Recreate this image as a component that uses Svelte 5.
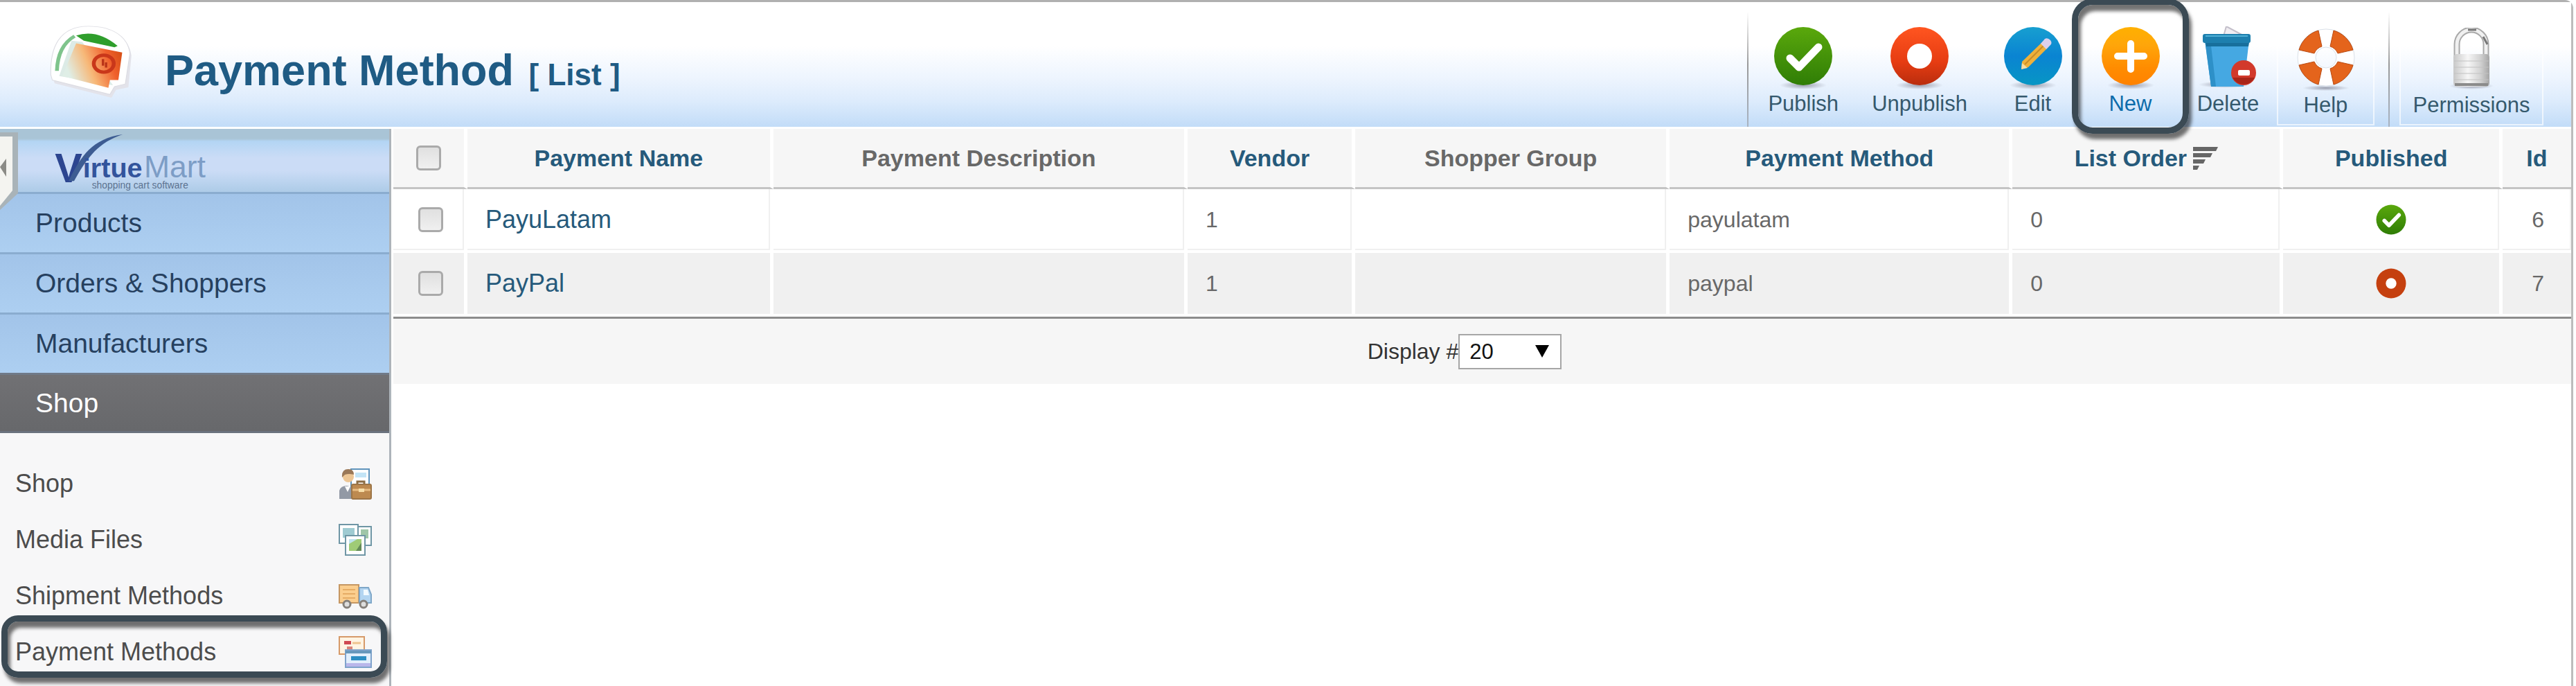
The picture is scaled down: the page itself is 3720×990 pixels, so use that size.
<script>
  const menu = ['Products', 'Orders & Shoppers', 'Manufacturers', 'Shop'];
  const shopLinks = [
    { label: 'Shop', icon: 'shop' },
    { label: 'Media Files', icon: 'media' },
    { label: 'Shipment Methods', icon: 'truck' },
    { label: 'Payment Methods', icon: 'cards', marked: true }
  ];
  const tools = [
    { label: 'Publish', icon: 'publish' },
    { label: 'Unpublish', icon: 'unpublish' },
    { label: 'Edit', icon: 'edit' },
    { label: 'New', icon: 'new', marked: true },
    { label: 'Delete', icon: 'delete' },
    { label: 'Help', icon: 'help', boxed: true }
  ];
  const columns = [
    { label: 'Payment Name', width: 14.05, sortable: true },
    { label: 'Payment Description', width: 19.02 },
    { label: 'Vendor', width: 7.7, sortable: true },
    { label: 'Shopper Group', width: 14.44 },
    { label: 'Payment Method', width: 15.74, sortable: true },
    { label: 'List Order', width: 12.44, sortable: true, sorted: true },
    { label: 'Published', width: 10.06, sortable: true },
    { label: 'Id', width: 3.15, sortable: true }
  ];
  let rows = $state([
    { id: 6, name: 'PayuLatam', vendor: 1, method: 'payulatam', order: 0, published: true, checked: false },
    { id: 7, name: 'PayPal', vendor: 1, method: 'paypal', order: 0, published: false, checked: false }
  ]);
  let active = $state('Shop');
  let limit = $state('20');

  function toggleAll(event) {
    for (const row of rows) row.checked = event.currentTarget.checked;
  }
</script>

{#snippet okBadge()}
  <circle cx="43" cy="43" r="42" fill="url(#gGreen)" />
  <path d="M24 46 L37 59 L65 30" fill="none" stroke="#fff" stroke-width="11" stroke-linecap="round" stroke-linejoin="round" />
{/snippet}

{#snippet toolIcon(name)}
  <svg class="tool-icon" viewBox="0 0 86 92" aria-hidden="true">
    {#if name === 'publish' || name === 'unpublish' || name === 'edit' || name === 'new'}
      <ellipse cx="43" cy="85" rx="34" ry="6" fill="url(#gShadow)" />
    {/if}
    {#if name === 'publish'}
      {@render okBadge()}
    {:else if name === 'unpublish'}
      <circle cx="43" cy="43" r="42" fill="url(#gRed)" />
      <circle cx="43" cy="43" r="18" fill="#fff" />
    {:else if name === 'edit'}
      <circle cx="43" cy="43" r="42" fill="url(#gBlue)" />
      <path d="M26 62 L27 51 L57 22 L65 30 L36 59 Z" fill="#eeb13c" />
      <path d="M31 55 L60 26" stroke="#c98c2a" stroke-width="2" />
      <path d="M26 62 L27 53 L35 60 Z" fill="#f5dba6" />
      <path d="M54 25 L60 18 Q64 16 68 20 Q71 24 68 27 L62 33 Z" fill="#dcd0ec" />
    {:else if name === 'new'}
      <circle cx="43" cy="43" r="42" fill="url(#gOrange)" />
      <path d="M43 25 V62 M24 43 H62" stroke="#fff" stroke-width="10" stroke-linecap="round" />
    {:else if name === 'delete'}
      <ellipse cx="38" cy="84" rx="38" ry="5" fill="url(#gShadow)" />
      <path d="M36 14 L40 0 L66 14 Z" fill="#f0edf2" stroke="#c3bfca" stroke-width="2" />
      <path d="M9 20 H73 L65 87 H18 Z" fill="#45a8e2" />
      <path d="M9 20 H17 L25 87 H18 Z" fill="#2e90c8" />
      <path d="M10 23 H73 L72 29 H11 Z" fill="#176f9c" />
      <rect x="6" y="11" width="69" height="13" rx="3" fill="#1d7fae" />
      <path d="M10 14 H71" stroke="#4fb0d6" stroke-width="2" />
      <circle cx="65" cy="67" r="18" fill="#d2392b" />
      <path d="M49 74 A18 18 0 0 0 81 74 Z" fill="#a92519" />
      <rect x="57" y="63" width="17" height="8" rx="2" fill="#fff" />
    {:else if name === 'help'}
      <ellipse cx="43" cy="87" rx="34" ry="4" fill="url(#gShadow)" />
      <circle cx="43" cy="43" r="28" fill="none" stroke="#fff" stroke-width="27" />
      <circle cx="43" cy="43" r="41" fill="none" stroke="#d9e0e8" stroke-width="1" />
      <circle cx="43" cy="43" r="15" fill="none" stroke="#d9e0e8" stroke-width="1" />
      <g fill="#e4641c" stroke="#b94a12" stroke-width="1">
        <path d="M32 4 A41 41 0 0 0 4 32 L26 37 A18 18 0 0 1 37 27 Z" />
        <path d="M54 4 A41 41 0 0 1 82 32 L60 37 A18 18 0 0 0 49 27 Z" />
        <path d="M32 82 A41 41 0 0 1 4 54 L26 49 A18 18 0 0 0 37 59 Z" />
        <path d="M54 82 A41 41 0 0 0 82 54 L60 49 A18 18 0 0 1 49 59 Z" />
      </g>
    {:else if name === 'lock'}
      <ellipse cx="43" cy="84" rx="32" ry="5" fill="url(#gShadow)" />
      <path d="M22 44 V24 A21 21 0 0 1 64 24 V44" fill="none" stroke="#a9a9a9" stroke-width="9" />
      <path d="M22 44 V24 A21 21 0 0 1 64 24 V44" fill="none" stroke="#f0f0f0" stroke-width="5" />
      <path d="M38 3 H50 M60 13 L66 24" stroke="#777" stroke-width="3" />
      <rect x="17" y="38" width="52" height="47" rx="5" fill="url(#gSteel)" />
      <path d="M18 48 H68 M18 57 H68 M18 66 H68 M18 75 H68" stroke="#c2c2c2" stroke-width="1" />
      <path d="M19 82 H67" stroke="#8b8b8b" stroke-width="4" />
    {/if}
  </svg>
{/snippet}

{#snippet linkIcon(name)}
  <svg class="link-icon" viewBox="0 0 48 48" aria-hidden="true">
    {#if name === 'shop'}
      <rect x="18" y="3" width="26" height="30" fill="#fff" stroke="#5f93bb" stroke-width="2" />
      <path d="M24 8 H40 V15 H24 Z" fill="#c3e4f6" />
      <path d="M1 46 V34 Q3 27 12 27 Q20 28 21 36 V46 Z" fill="#9299a5" />
      <path d="M9 28 L13 36 L17 28 Z" fill="#fff" />
      <circle cx="14" cy="14" r="8" fill="#edc695" />
      <path d="M5 15 Q4 3 14 3 Q22 3 22 11 Q15 9 9 11 Z" fill="#9a7858" />
      <path d="M27 26 V21 H37 V26" fill="none" stroke="#8b6d45" stroke-width="3" />
      <rect x="19" y="25" width="28" height="21" rx="2" fill="#bd8a50" stroke="#9c7547" stroke-width="2" />
      <path d="M20 33 H46" stroke="#e8bd83" stroke-width="3" />
      <rect x="29" y="31" width="8" height="5" fill="#f7dfa9" />
    {:else if name === 'media'}
      <g fill="#fff" stroke="#6f96a5" stroke-width="2">
        <rect x="28" y="5" width="19" height="27" />
        <rect x="1" y="2" width="27" height="27" />
      </g>
      <rect x="6" y="7" width="17" height="14" fill="#9fcbd2" />
      <rect x="32" y="9" width="11" height="13" fill="#9fc6a8" />
      <rect x="10" y="18" width="28" height="28" fill="#fff" stroke="#6f96a5" stroke-width="2" />
      <rect x="15" y="23" width="18" height="17" fill="#9fcb76" />
      <path d="M15 30 V23 H27 Z" fill="#bfe3ed" />
      <path d="M25 40 L33 28 V40 Z" fill="#648b57" />
    {:else if name === 'truck'}
      <rect x="1" y="8" width="28" height="26" fill="#fbce8e" stroke="#c59763" stroke-width="2" />
      <path d="M6 15 H24 M6 21 H24 M6 27 H24" stroke="#e6ac65" stroke-width="2" />
      <path d="M30 12 H43 L47 22 V34 H30 Z" fill="#b3d5f1" stroke="#7fa7c8" stroke-width="2" />
      <path d="M36 15 H42 L44 23 H36 Z" fill="#f2faff" />
      <circle cx="12" cy="36" r="5" fill="#ddd" stroke="#85807b" stroke-width="3" />
      <circle cx="36" cy="36" r="5" fill="#ddd" stroke="#85807b" stroke-width="3" />
    {:else}
      <rect x="1" y="2" width="36" height="25" fill="#fff4e3" stroke="#d69a69" stroke-width="2" />
      <rect x="8" y="8" width="10" height="5" fill="#cf4a52" />
      <rect x="12" y="16" width="8" height="4" fill="#d88579" />
      <path d="M20 11 H32" stroke="#efc48e" stroke-width="3" />
      <rect x="10" y="21" width="37" height="25" fill="#e2effc" stroke="#7fa3cb" stroke-width="2" />
      <path d="M10 24 H47" stroke="#6798bc" stroke-width="4" />
      <rect x="18" y="30" width="22" height="6" fill="#2e8fc4" />
      <rect x="11" y="40" width="35" height="5" fill="#b9b6ea" />
    {/if}
  </svg>
{/snippet}

<svg class="defs" width="0" height="0" aria-hidden="true">
  <defs>
    <linearGradient id="gGreen" x1="0" y1="0" x2="0" y2="1"><stop offset="0" stop-color="#5aa80c" /><stop offset="1" stop-color="#2f7d06" /></linearGradient>
    <linearGradient id="gRed" x1="0" y1="0" x2="0" y2="1"><stop offset="0" stop-color="#ff5520" /><stop offset="0.6" stop-color="#e63c12" /><stop offset="1" stop-color="#b92d0e" /></linearGradient>
    <linearGradient id="gBlue" x1="0" y1="0" x2="0" y2="1"><stop offset="0" stop-color="#179fd0" /><stop offset="0.5" stop-color="#0a84d2" /><stop offset="1" stop-color="#0796c4" /></linearGradient>
    <linearGradient id="gOrange" x1="0" y1="0" x2="0" y2="1"><stop offset="0" stop-color="#ffb000" /><stop offset="0.3" stop-color="#ffa60a" /><stop offset="0.7" stop-color="#ff8c00" /><stop offset="1" stop-color="#ff8200" /></linearGradient>
    <linearGradient id="gSteel" x1="0" y1="0" x2="1" y2="0"><stop offset="0" stop-color="#c8c8c8" /><stop offset="0.4" stop-color="#f6f6f6" /><stop offset="0.75" stop-color="#d2d2d2" /><stop offset="1" stop-color="#a5a5a5" /></linearGradient>
    <radialGradient id="gShadow"><stop offset="0" stop-color="#667" stop-opacity="0.6" /><stop offset="1" stop-color="#667" stop-opacity="0" /></radialGradient>
    <linearGradient id="gCard" x1="0" y1="0.3" x2="1" y2="0"><stop offset="0" stop-color="#dfeee6" /><stop offset="0.35" stop-color="#f7b878" /><stop offset="0.7" stop-color="#f0602c" /><stop offset="1" stop-color="#cf4a10" /></linearGradient>
  </defs>
</svg>

<div class="page">
  <header>
    <svg class="title-icon" viewBox="0 0 110 112" preserveAspectRatio="none" aria-hidden="true">
      <path d="M4 78 C2 34 14 2 52 2 C86 2 104 20 106 44 L102 92 L86 96 L80 108 L6 86 Z" fill="#e3e3ea" transform="translate(2 3)" />
      <path d="M3 76 C2 34 14 2 52 2 C86 2 104 20 106 44 L100 90 L86 94 L80 106 L5 84 Z" fill="#fff" stroke="#dcdce2" stroke-width="1" />
      <path d="M36 16 Q64 6 90 32 L86 34 L46 24 Z" fill="#2f9e2c" />
      <path d="M34 17 Q12 32 11 70" fill="none" stroke="#7fc48c" stroke-width="5" />
      <path d="M30 24 L44 26 L84 92 L14 78 Z" fill="#dcebe6" />
      <path d="M36 28 L96 42 L91 84 L80 84 L78 96 L18 78 Z" fill="url(#gCard)" />
      <circle cx="72" cy="59" r="13" fill="none" stroke="#c9371a" stroke-width="5" />
      <path d="M71 52 V62 M75 57 V65" stroke="#b93318" stroke-width="3" />
    </svg>
    <h1>Payment Method <small>[ List ]</small></h1>
    <div class="toolbar">
      {#each tools as tool}
        <button type="button" class:boxed={tool.boxed} class:current={tool.marked}>
          {@render toolIcon(tool.icon)}
          <span>{tool.label}</span>
          {#if tool.marked}<i class="marker"></i>{/if}
        </button>
      {/each}
    </div>
    <div class="toolbar last">
      <button type="button" class="boxed">
        {@render toolIcon('lock')}
        <span>Permissions</span>
      </button>
    </div>
  </header>

  <div class="body">
    <aside>
      <button type="button" class="collapse" aria-label="Collapse menu">
        <svg viewBox="0 0 28 112" aria-hidden="true">
          <path d="M0 0 H26 V88 L0 112 Z" fill="#a9b3b8" />
          <path d="M0 6 H18 V84 L0 106 Z" fill="#f4f4f0" />
          <path d="M0 50 L9 38 V64 Z" fill="#8b8b86" />
        </svg>
      </button>
      <a class="logo" href="#home" aria-label="VirtueMart">
        <svg viewBox="0 0 240 92" aria-hidden="true">
          <text x="0" y="78" class="logo-v">V</text>
          <path d="M20 76 C36 44 52 14 99 8 C62 20 46 44 28 76 Z" fill="#3d5c92" />
          <text x="41" y="71" class="logo-a">irtue</text>
          <text x="130" y="71" class="logo-b">Mart</text>
          <text x="54" y="87" class="logo-c">shopping cart software</text>
        </svg>
      </a>
      <nav class="menu">
        {#each menu as item}
          <button type="button" class:active={item === active} onclick={() => (active = item)}>{item}</button>
        {/each}
      </nav>
      <nav class="links">
        {#each shopLinks as link}
          <a href="#{link.icon}">
            <span>{link.label}</span>
            {@render linkIcon(link.icon)}
            {#if link.marked}<i class="marker"></i>{/if}
          </a>
        {/each}
      </nav>
    </aside>

    <main>
      <table>
        <colgroup>
          <col style="width: 3.4%" />
          {#each columns as column}<col style="width: {column.width}%" />{/each}
        </colgroup>
        <thead>
          <tr>
            <th><input type="checkbox" aria-label="Select all" onchange={toggleAll} /></th>
            {#each columns as column}
              <th>
                {#if column.sortable}
                  <a href="#sort">{column.label}{#if column.sorted}<svg class="sort" viewBox="0 0 36 34" aria-hidden="true"><path d="M0 0 H36 L33 6 H0 Z M0 9 H28 L25 15 H0 Z M0 18 H18 L15 24 H0 Z M0 27 H9 L6 33 H0 Z" fill="#666" /></svg>{/if}</a>
                {:else}
                  {column.label}
                {/if}
              </th>
            {/each}
          </tr>
        </thead>
        <tbody>
          {#each rows as row}
            <tr>
              <td class="pick"><input type="checkbox" aria-label="Select {row.name}" bind:checked={row.checked} /></td>
              <td class="name"><a href="#edit">{row.name}</a></td>
              <td></td>
              <td>{row.vendor}</td>
              <td></td>
              <td>{row.method}</td>
              <td>{row.order}</td>
              <td class="state">
                <button type="button" aria-label={row.published ? 'Published' : 'Unpublished'} onclick={() => (row.published = !row.published)}>
                  <svg viewBox="0 0 86 86" aria-hidden="true">
                    {#if row.published}
                      {@render okBadge()}
                    {:else}
                      <circle cx="43" cy="43" r="42" fill="#c5400f" />
                      <circle cx="43" cy="43" r="15" fill="#fff" />
                    {/if}
                  </svg>
                </button>
              </td>
              <td class="id">{row.id}</td>
            </tr>
          {/each}
        </tbody>
      </table>
      <div class="pager">
        <label for="limit">Display #</label>
        <div class="select">
          <select id="limit" bind:value={limit}>
            <option>5</option>
            <option>10</option>
            <option>20</option>
            <option>50</option>
          </select>
          <svg viewBox="0 0 20 18" aria-hidden="true"><path d="M0 0 H20 L10 18 Z" fill="#000" /></svg>
        </div>
      </div>
    </main>
  </div>
</div>

<style>
  :global(body) {
    margin: 0;
    background: #fff;
    font-family: 'Liberation Sans', Arial, sans-serif;
  }
  * {
    box-sizing: border-box;
  }
  button {
    font: inherit;
    border: 0;
    padding: 0;
    margin: 0;
    background: none;
    cursor: pointer;
  }
  a {
    color: inherit;
    text-decoration: none;
  }
  .defs {
    position: absolute;
  }
  .page {
    display: flex;
    flex-direction: column;
    min-height: 100vh;
    margin-right: 4px;
    border-top: 3px solid #b0b0b0;
    border-right: 3px solid #bcbcbc;
    border-top-right-radius: 12px;
  }

  header {
    display: flex;
    height: 183px;
    padding: 0 40px 0 70px;
    border-bottom: 3px solid #fff;
    background: linear-gradient(#fff 0%, #fff 35%, #eef5fe 60%, #dcebfc 80%, #c2dcf8 100%);
  }
  .title-icon {
    width: 122px;
    height: 106px;
    margin-top: 33px;
    flex: none;
  }
  h1 {
    flex: 1;
    margin: 0;
    padding: 62px 0 0 46px;
    color: #1f5b84;
    font-size: 63px;
    line-height: 72px;
    white-space: nowrap;
  }
  h1 small {
    margin-left: 4px;
    font-size: 44px;
  }
  .toolbar {
    display: flex;
    padding: 17px 20px 0 4px;
    border-left: 2px solid;
    border-image: linear-gradient(#fff 8%, #999 50%, #a9b4c2) 1;
  }
  .toolbar.last {
    padding: 17px 0 0 14px;
  }
  .toolbar button {
    position: relative;
    display: flex;
    flex-direction: column;
    align-items: center;
    gap: 2px;
    min-width: 141px;
    height: 161px;
    padding: 18px 24px 0;
    color: #35596d;
    font-size: 31px;
    line-height: 36px;
  }
  .toolbar button.current {
    color: #0d6cab;
  }
  .toolbar .boxed {
    border: 2px solid rgba(255, 255, 255, 0.65);
  }
  .last .boxed {
    min-width: 208px;
    padding: 18px 0 0;
  }
  .tool-icon {
    width: 86px;
    height: 92px;
    flex: none;
  }
  .marker {
    position: absolute;
    border: 9px solid #3b4a54;
    border-radius: 30px;
    box-shadow: 4px 8px 5px rgba(0, 0, 0, 0.55), inset 4px 9px 5px rgba(0, 0, 0, 0.55);
    pointer-events: none;
  }
  .toolbar .marker {
    inset: -22px -14px -12px;
    z-index: 2;
  }

  .body {
    flex: 1;
    display: flex;
  }
  aside {
    position: relative;
    flex: none;
    width: 565px;
    margin-right: 3px;
    border-right: 3px solid #adb4ba;
    background: #f7f7f8;
  }
  .collapse {
    position: absolute;
    left: 0;
    top: 5px;
    width: 28px;
    height: 112px;
  }
  .collapse svg {
    display: block;
    width: 28px;
  }
  .logo {
    display: block;
    height: 91px;
    padding-left: 78px;
    background: linear-gradient(#a9c4d6 0, #a9c4d6 14px, #b3d5f4 18px, #cbdcf6 42px, #cbdcf6 60px, #aecce8 90px);
  }
  .logo svg {
    display: block;
    width: 240px;
    height: 91px;
  }
  .logo-v {
    font: bold 60px 'Liberation Sans', sans-serif;
    fill: #2c4590;
  }
  .logo-a {
    font: bold 40px 'Liberation Sans', sans-serif;
    fill: #33549c;
  }
  .logo-b {
    font: 45px 'Liberation Sans', sans-serif;
    fill: #7d9dc6;
  }
  .logo-c {
    font: 14px 'Liberation Sans', sans-serif;
    fill: #5c7290;
  }
  .menu button {
    display: block;
    width: 100%;
    height: 87px;
    padding-left: 51px;
    border-top: 3px solid #8aaccf;
    background: linear-gradient(#a2c4e9, #adcff1);
    color: #26405f;
    font-size: 39px;
    text-align: left;
  }
  .menu .active {
    border-top-color: #707a88;
    border-bottom: 3px solid #6a727e;
    background: linear-gradient(#717174, #67686b);
    color: #fff;
  }
  .links {
    padding-top: 32px;
  }
  .links a {
    position: relative;
    display: flex;
    align-items: center;
    justify-content: space-between;
    height: 81px;
    padding: 0 25px 0 22px;
    color: #4c4c4c;
    font-size: 36px;
  }
  .link-icon {
    width: 48px;
    height: 48px;
  }
  .links .marker {
    inset: -12px 3px 3px 2px;
    border-radius: 24px;
  }

  main {
    flex: 1;
    min-width: 0;
  }
  table {
    width: 100%;
    table-layout: fixed;
    border-spacing: 0;
    border-bottom: 3px solid #8c8c8c;
    color: #686868;
    font-size: 32px;
  }
  th,
  td {
    height: 92px;
    padding: 0;
    border-right: 5px solid #fff;
  }
  th {
    height: 87px;
    border-bottom: 3px solid #c4c4c4;
    background: #f6f6f6;
    font-size: 34px;
    white-space: nowrap;
  }
  td {
    padding-left: 26px;
    border-bottom: 4px solid #fff;
    box-shadow: inset -2px -2px #f0f0f0;
  }
  th:last-child,
  td:last-child {
    border-right: 0;
  }
  tbody tr:nth-child(even) td {
    background: #f0f0f0;
  }
  th a,
  .name a {
    color: #265a7b;
  }
  .name {
    font-size: 36px;
  }
  input {
    appearance: none;
    display: block;
    width: 36px;
    height: 36px;
    margin: 0 auto;
    border: 3px solid #aaa;
    border-radius: 6px;
    background: linear-gradient(#e0e0e0, #f0f0f0);
  }
  input:checked {
    background: #56799a;
  }
  .pick {
    padding-left: 6px;
  }
  .sort {
    width: 36px;
    height: 34px;
    margin-left: 9px;
    vertical-align: -6px;
  }
  .state {
    padding: 0;
    text-align: center;
  }
  .state button,
  .state svg {
    display: block;
    width: 44px;
    height: 44px;
    margin: 0 auto;
  }
  .id {
    padding: 0 39px 0 0;
    text-align: right;
  }
  .pager {
    display: flex;
    align-items: center;
    justify-content: center;
    height: 94px;
    padding-right: 51px;
    background: #f6f6f6;
    color: #333;
    font-size: 32px;
  }
  .select {
    position: relative;
  }
  select {
    appearance: none;
    display: block;
    width: 149px;
    height: 51px;
    padding: 0 14px;
    border: 2px solid #a6a6a6;
    border-radius: 0;
    background: #fff;
    color: #111;
    font: inherit;
    font-size: 31px;
  }
  .select svg {
    position: absolute;
    right: 18px;
    top: 16px;
    width: 20px;
    height: 18px;
    pointer-events: none;
  }
</style>
